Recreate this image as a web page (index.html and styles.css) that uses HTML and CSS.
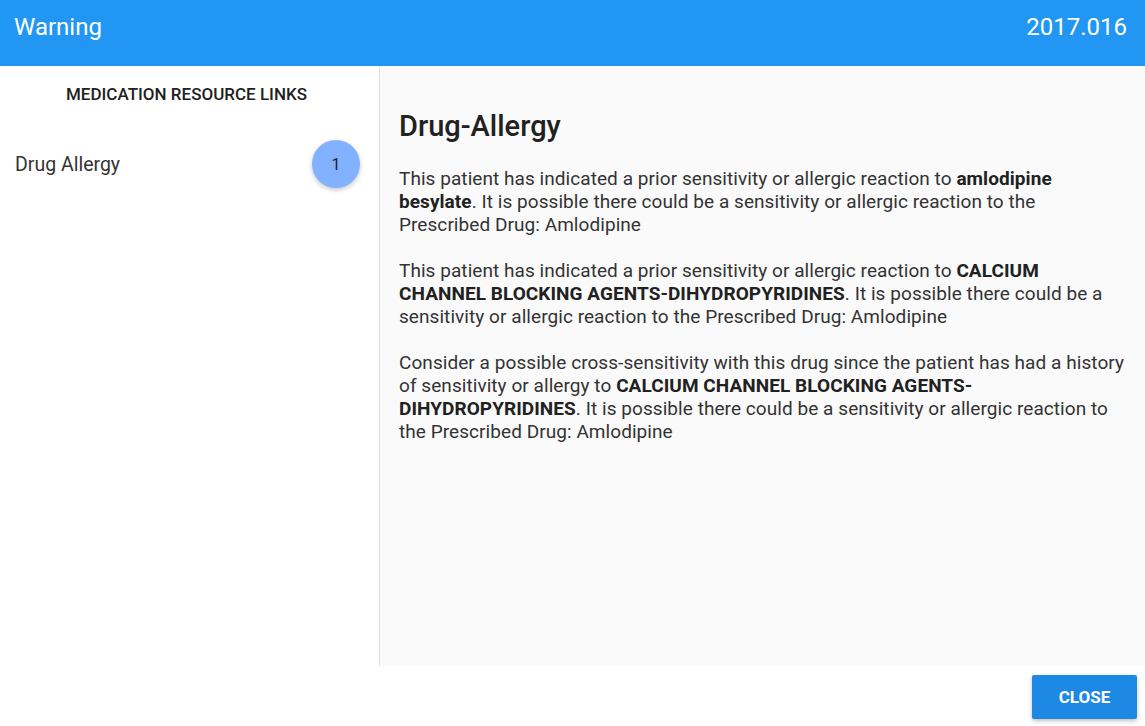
FILE: index.html
```html
<!DOCTYPE html>
<html>
<head>
<meta charset="utf-8">
<link rel="stylesheet" href="styles.css">
</head>
<body>
<div class="app">
  <header class="topbar">
    <span class="title">Warning</span>
    <span class="version">2017.016</span>
  </header>
  <div class="main">
    <aside class="sidebar">
      <div class="side-title">MEDICATION RESOURCE LINKS</div>
      <div class="side-item">
        <span class="item-label">Drug Allergy</span>
        <span class="badge">1</span>
      </div>
    </aside>
    <section class="content">
      <h1 class="heading">Drug-Allergy</h1>
      <p class="para">This patient has indicated a prior sensitivity or allergic reaction to <b>amlodipine besylate</b>. It is possible there could be a sensitivity or allergic reaction to the Prescribed Drug: Amlodipine</p>
      <p class="para">This patient has indicated a prior sensitivity or allergic reaction to <b>CALCIUM CHANNEL BLOCKING AGENTS-DIHYDROPYRIDINES</b>. It is possible there could be a sensitivity or allergic reaction to the Prescribed Drug: Amlodipine</p>
      <p class="para">Consider a possible cross-sensitivity with this drug since the patient has had a history of sensitivity or allergy to <b>CALCIUM CHANNEL BLOCKING AGENTS-DIHYDROPYRIDINES</b>. It is possible there could be a sensitivity or allergic reaction to the Prescribed Drug: Amlodipine</p>
    </section>
  </div>
  <footer class="footer">
    <button class="close-btn">CLOSE</button>
  </footer>
</div>
</body>
</html>
```

FILE: styles.css
```css
html, body {
  margin: 0;
  padding: 0;
}
body {
  font-family: Roboto, "Liberation Sans", sans-serif;
  color: #212121;
  background: #fff;
}
.app {
  width: 1145px;
  height: 726px;
  display: flex;
  flex-direction: column;
}
.topbar {
  height: 66px;
  flex: none;
  background: #2196f3;
  color: #fff;
  display: flex;
  align-items: center;
  justify-content: space-between;
  padding: 0 18px 12px 14px;
  box-sizing: border-box;
  font-size: 24px;
}
.main {
  flex: 1;
  display: flex;
  min-height: 0;
}
.sidebar {
  width: 379px;
  flex: none;
  border-right: 1px solid #e0e0e0;
  background: #fff;
}
.side-title {
  text-align: center;
  font-size: 17px;
  font-weight: 500;
  color: #212121;
  padding: 18px 6px 0 0;
  line-height: 20px;
}
.side-item {
  display: flex;
  align-items: center;
  justify-content: space-between;
  padding: 36px 19px 0 15px;
}
.item-label {
  font-size: 19.5px;
  color: #333;
}
.badge {
  width: 48px;
  height: 48px;
  border-radius: 50%;
  background: #82b1ff;
  color: #212121;
  font-size: 16px;
  display: flex;
  align-items: center;
  justify-content: center;
  box-shadow: 0 2px 5px rgba(0,0,0,0.22);
}
.content {
  flex: 1;
  background: #fafafa;
  padding: 0 18px 0 19px;
}
.heading {
  font-size: 29px;
  font-weight: 500;
  margin: 43px 0 24px;
  line-height: 34px;
  color: #212121;
}
.para {
  font-size: 19px;
  line-height: 23px;
  letter-spacing: 0.06px;
  margin: 0 0 23px;
  color: #333;
}
.para b {
  font-weight: 700;
  color: #212121;
}
.footer {
  height: 60px;
  flex: none;
  display: flex;
  justify-content: flex-end;
  align-items: flex-start;
  padding: 9px 8px 0 0;
  box-sizing: border-box;
}
.close-btn {
  width: 105px;
  height: 44px;
  background: #1e88e5;
  color: #fff;
  border: none;
  border-radius: 2px;
  font-family: Roboto, "Liberation Sans", sans-serif;
  font-size: 17px;
  font-weight: 700;
  box-shadow: 0 2px 4px rgba(0,0,0,0.25);
}
```
